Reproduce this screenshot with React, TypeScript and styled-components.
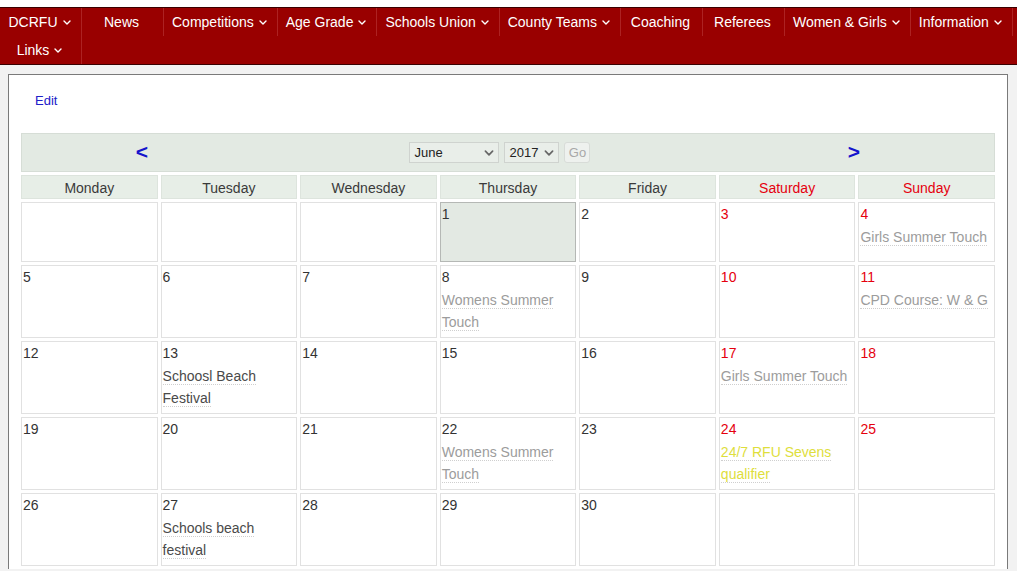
import React from "react";
import styled, { createGlobalStyle } from "styled-components";

const Global = createGlobalStyle`
  html, body {
    margin: 0;
    padding: 0;
    background: #f2f2f2;
    font-family: "Liberation Sans", Arial, sans-serif;
  }
  * { box-sizing: border-box; }
`;

/* ---------- top navigation ---------- */

const Masthead = styled.header`
  background: #ffffff;
  padding-top: 7px;
`;

const Nav = styled.nav`
  display: flex;
  flex-wrap: wrap;
  background: #990000;
  border-top: 1px solid #3a0000;
  border-bottom: 1px solid #3a0000;
`;

const NavItem = styled.a`
  display: flex;
  align-items: center;
  justify-content: center;
  gap: 5px;
  min-width: 82px;
  height: 28px;
  padding: 0 10px 0 8px;
  color: #ffffff;
  font-size: 14px;
  text-decoration: none;
  border-right: 1px solid #ad2222;
  white-space: nowrap;
`;

const Chevron = ({ color = "#fff", w = 8, h = 5 }: { color?: string; w?: number; h?: number }) => (
  <svg width={w} height={h} viewBox="0 0 8 5" fill="none" style={{ display: "block" }}>
    <path d="M1 1l3 3 3-3" stroke={color} strokeWidth="1.4" strokeLinecap="round" strokeLinejoin="round" />
  </svg>
);

/* ---------- content panel ---------- */

const Panel = styled.main`
  margin: 9px 9px 0 8px;
  background: #ffffff;
  border: 1px solid #7a7a7a;
  border-bottom: none;
  padding: 17px 9px 0 9px;
`;

const EditBar = styled.div`
  padding-left: 17px;
  margin-bottom: 21px;
  line-height: 16px;
`;

const EditLink = styled.a`
  color: #2020c8;
  font-size: 13px;
  text-decoration: none;
`;

const Calendar = styled.div`
  display: grid;
  grid-template-columns: repeat(7, 1fr);
  gap: 3px;
  padding: 3px;
`;

const MonthBar = styled.div`
  grid-column: 1 / -1;
  display: grid;
  grid-template-columns: 240px 1fr 280px;
  align-items: center;
  height: 39px;
  background: #e3eae3;
  border: 1px solid #d6ddd6;
`;

const Arrow = styled.a`
  justify-self: center;
  color: #1414cc;
  font-size: 21px;
  font-weight: bold;
  text-decoration: none;
  line-height: 20px;
  margin-top: -1px;
`;

const Pickers = styled.div`
  display: flex;
  justify-content: center;
  gap: 5px;
  padding-left: 24px;
`;

const SelectWrap = styled.span<{ $w: number }>`
  position: relative;
  display: block;
  width: ${(p) => p.$w}px;
  height: 21px;
`;

const Select = styled.select`
  appearance: none;
  width: 100%;
  height: 100%;
  margin: 0;
  padding: 0 0 0 4px;
  background: #e9eee9;
  border: 1px solid #cfd3cf;
  border-radius: 0;
  color: #222;
  font-family: "Liberation Sans", Arial, sans-serif;
  font-size: 13px;
`;

const SelectCaret = styled.span`
  position: absolute;
  right: 5px;
  top: 8px;
  pointer-events: none;
`;

const GoButton = styled.button`
  width: 26px;
  height: 21px;
  padding: 0;
  background: #eef1ee;
  border: 1px solid #d8dcd8;
  border-radius: 3px;
  color: #a8a8a8;
  font-family: "Liberation Sans", Arial, sans-serif;
  font-size: 13px;
`;

const DayHead = styled.div<{ $weekend: boolean }>`
  height: 24px;
  padding-top: 1px;
  line-height: 22px;
  text-align: center;
  background: #e7eee7;
  border: 1px solid #dde4dd;
  color: ${(p) => (p.$weekend ? "#e5000e" : "#3a3a3a")};
  font-size: 14px;
`;

const Cell = styled.div<{ $today?: boolean }>`
  min-height: 60px;
  padding: 1px 2px 4px 1px;
  background: ${(p) => (p.$today ? "#e3e9e3" : "#ffffff")};
  border: 1px solid ${(p) => (p.$today ? "#b5b8b5" : "#e1e1e1")};
  font-size: 14px;
`;

const DayNum = styled.div<{ $weekend: boolean }>`
  line-height: 20px;
  color: ${(p) => (p.$weekend ? "#e5000e" : "#333333")};
`;

type Tone = "muted" | "dark" | "yellow";

const toneColor: Record<Tone, string> = {
  muted: "#9c9c9c",
  dark: "#4a4a4a",
  yellow: "#dede3c",
};

const EventLine = styled.div`
  margin-top: 2px;
  line-height: 22px;
`;

const EventLink = styled.a<{ $tone: Tone }>`
  color: ${(p) => toneColor[p.$tone]};
  text-decoration: none;
  border-bottom: 1px dotted #cfcfcf;
`;

const navItems: { label: string; menu: boolean }[] = [
  { label: "DCRFU", menu: true },
  { label: "News", menu: false },
  { label: "Competitions", menu: true },
  { label: "Age Grade", menu: true },
  { label: "Schools Union", menu: true },
  { label: "County Teams", menu: true },
  { label: "Coaching", menu: false },
  { label: "Referees", menu: false },
  { label: "Women & Girls", menu: true },
  { label: "Information", menu: true },
  { label: "Links", menu: true },
];

const weekdays = ["Monday", "Tuesday", "Wednesday", "Thursday", "Friday", "Saturday", "Sunday"];

const events: Record<number, { title: string; tone: Tone }> = {
  4: { title: "Girls Summer Touch", tone: "muted" },
  8: { title: "Womens Summer Touch", tone: "muted" },
  11: { title: "CPD Course: W & G", tone: "muted" },
  13: { title: "Schoosl Beach Festival", tone: "dark" },
  17: { title: "Girls Summer Touch", tone: "muted" },
  22: { title: "Womens Summer Touch", tone: "muted" },
  24: { title: "24/7 RFU Sevens qualifier", tone: "yellow" },
  27: { title: "Schools beach festival", tone: "dark" },
};

const months = [
  "January", "February", "March", "April", "May", "June",
  "July", "August", "September", "October", "November", "December",
];

// June 2017: the 1st falls on a Thursday, 30 days
const leading = 3;
const daysInMonth = 30;
const today = 1;

export default function App() {
  const slots: (number | null)[] = [];
  for (let i = 0; i < leading; i++) slots.push(null);
  for (let d = 1; d <= daysInMonth; d++) slots.push(d);
  while (slots.length % 7 !== 0) slots.push(null);

  return (
    <>
      <Global />
      <Masthead>
        <Nav>
          {navItems.map((item) => (
            <NavItem key={item.label} href="#">
              {item.label}
              {item.menu && <Chevron />}
            </NavItem>
          ))}
        </Nav>
      </Masthead>

      <Panel>
        <EditBar>
          <EditLink href="#">Edit</EditLink>
        </EditBar>

        <Calendar>
          <MonthBar>
            <Arrow href="#">&lt;</Arrow>
            <Pickers>
              <SelectWrap $w={90}>
                <Select defaultValue="June">
                  {months.map((m) => (
                    <option key={m}>{m}</option>
                  ))}
                </Select>
                <SelectCaret>
                  <Chevron color="#666" w={10} h={6} />
                </SelectCaret>
              </SelectWrap>
              <SelectWrap $w={55}>
                <Select defaultValue="2017">
                  {[2015, 2016, 2017, 2018, 2019].map((y) => (
                    <option key={y}>{y}</option>
                  ))}
                </Select>
                <SelectCaret>
                  <Chevron color="#666" w={10} h={6} />
                </SelectCaret>
              </SelectWrap>
              <GoButton disabled>Go</GoButton>
            </Pickers>
            <Arrow href="#">&gt;</Arrow>
          </MonthBar>

          {weekdays.map((d, i) => (
            <DayHead key={d} $weekend={i >= 5}>
              {d}
            </DayHead>
          ))}

          {slots.map((day, i) => {
            const weekend = i % 7 >= 5;
            if (day === null) return <Cell key={`e${i}`} />;
            const ev = events[day];
            return (
              <Cell key={day} $today={day === today}>
                <DayNum $weekend={weekend}>{day}</DayNum>
                {ev && (
                  <EventLine>
                    <EventLink href="#" $tone={ev.tone}>
                      {ev.title}
                    </EventLink>
                  </EventLine>
                )}
              </Cell>
            );
          })}
        </Calendar>
      </Panel>
    </>
  );
}
